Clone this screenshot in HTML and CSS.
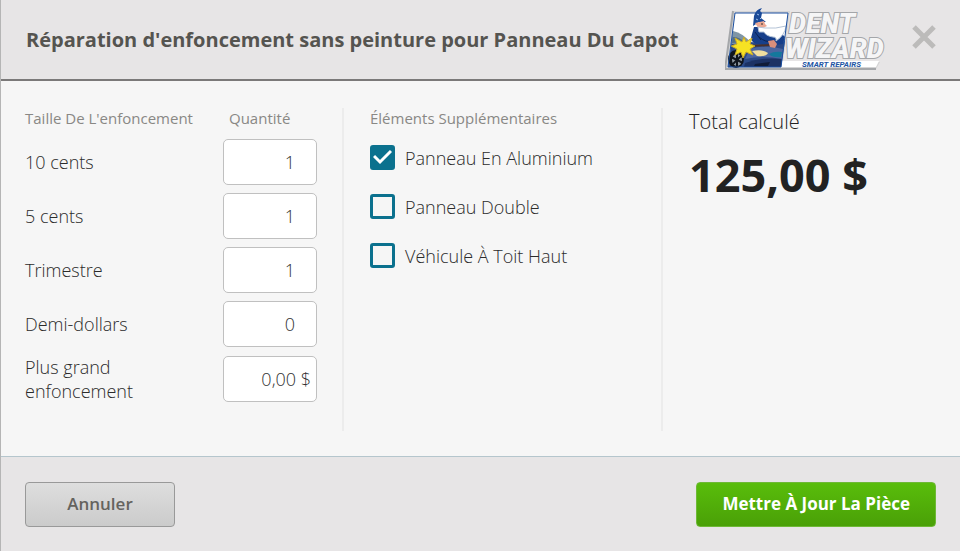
FILE: index.html
```html
<!DOCTYPE html>
<html lang="fr">

<head>
    <meta charset="UTF-8">
    <meta name="viewport" content="width=device-width, initial-scale=1.0">
    <title>Réparation d'enfoncement</title>
    <link rel="stylesheet" href="styles.css">
</head>

<body>
    <form class="modal">
        <header class="modal-header">
            <h1>Réparation d'enfoncement sans peinture pour Panneau Du Capot</h1>
            <svg class="logo" viewBox="0 0 162 66" role="img" aria-label="Dent Wizard Smart Repairs">
                <!-- silver edge -->
                <path d="M8 4H65L58 55H155L151 62H0Z" fill="#d4d4d5"/>
                <path d="M8 4L0 62H151" fill="none" stroke="#a5a7aa" stroke-width="2"/>
                <path d="M57 54H154L151 60H55Z" fill="#fff"/>
                <path d="M10 6H63L56 60H3Z" fill="#fff"/>
                <!-- car -->
                <path d="M8 26Q18 27 24 35L44 36L60 34L56 60H3L7 32Z" fill="#2c4a86"/>
                <path d="M8 24Q18 26 26 36L7 37Z" fill="#7f95a5"/>
                <path d="M8 30Q15 30 19 35L7 36Z" fill="#536f86"/>
                <path d="M25 42Q40 37 58 42L57 52Q38 48 20 52Z" fill="#4b66a0"/>
                <path d="M20 56Q36 50 57 52L56 60H19Z" fill="#1c3264"/>
                <path d="M27 44Q38 42 43 46Q41 50 32 49Z" fill="#f0dfa0"/>
                <path d="M44 47Q49 44 57 45L56 50Q48 51 44 47Z" fill="#14789c"/>
                <path d="M30 57L45 55L43 59H29Z" fill="#101c38"/>
                <ellipse cx="11" cy="52" rx="8" ry="9" fill="#10151d"/>
                <ellipse cx="12" cy="53" rx="5" ry="6" fill="#8d969e"/>
                <path d="M12 46V60M6 50L18 56M7 58L17 48" stroke="#10151d" stroke-width="2"/>
                <!-- robe and hat -->
                <path d="M29 20L26 31Q27 37 34 37L44 39L58 37L60 30L56 26L45 27L36 20Z" fill="#173f8a"/>
                <path d="M34 30Q41 36 47 34M30 25L36 33" fill="none" stroke="#0b2355"/>
                <path d="M28 19L29 9Q31 2 37 1L35 4L37 6L36 11L41 15L34 15Z" fill="#1a4997"/>
                <path d="M32 7L34 8M31 12L33 13M35 11L36 12" stroke="#9ec1ec"/>
                <!-- face and beard -->
                <path d="M30 16L39 14L40 17L42 19L38 21L34 22Z" fill="#eba792"/>
                <path d="M36 17H38" stroke="#333"/>
                <path d="M33 20L40 21Q51 22 61 19Q60 28 51 34Q52 30 48 30Q41 29 39 25L34 25Z" fill="#fff" stroke="#b4c3d6"/>
                <!-- hand and tool -->
                <path d="M24 39L45 38" stroke="#4b3029" stroke-width="2"/>
                <path d="M43 34L49 33L52 37L50 41L45 40Z" fill="#d98f7b"/>
                <!-- spark -->
                <path d="M19 30L21 35L27 31L25 37L30 39L25 42L28 48L21 45L18 51L16 45L10 48L12 42L6 39L12 37L10 31L17 35Z" fill="#f7e223" stroke="#c9a92a"/>
                <path d="M10 6H63L56 60H3Z" fill="none" stroke="#1b4fa0"/>
                <text class="logo-name" x="64" y="26">DENT</text>
                <text class="logo-name" x="60" y="51">WIZARD</text>
                <text class="logo-tag" x="77" y="60">SMART REPAIRS</text>
            </svg>
            <button class="close" type="button" aria-label="Fermer">
                <svg viewBox="0 0 24 24"><path d="M2 2L22 22M22 2L2 22"/></svg>
            </button>
        </header>

        <div class="modal-body">
            <section class="sizes">
                <div class="row head">
                    <span>Taille De L'enfoncement</span>
                    <span class="qty-title">Quantité</span>
                </div>
                <div class="row">
                    <label for="dime">10 cents</label>
                    <input class="qty" type="text" id="dime" value="1">
                </div>
                <div class="row">
                    <label for="nickel">5 cents</label>
                    <input class="qty" type="text" id="nickel" value="1">
                </div>
                <div class="row">
                    <label for="quarter">Trimestre</label>
                    <input class="qty" type="text" id="quarter" value="1">
                </div>
                <div class="row">
                    <label for="half">Demi-dollars</label>
                    <input class="qty" type="text" id="half" value="0">
                </div>
                <div class="row">
                    <label for="oversize">Plus grand enfoncement</label>
                    <input class="qty money" type="text" id="oversize" value="0,00 $">
                </div>
            </section>

            <section class="extras">
                <h2>Éléments Supplémentaires</h2>
                <label class="check"><input type="checkbox" checked> Panneau En Aluminium</label>
                <label class="check"><input type="checkbox"> Panneau Double</label>
                <label class="check"><input type="checkbox"> Véhicule À Toit Haut</label>
            </section>

            <section class="total">
                <p>Total calculé</p>
                <strong>125,00 $</strong>
            </section>
        </div>

        <footer class="modal-footer">
            <button class="btn" type="button">Annuler</button>
            <button class="btn primary" type="submit">Mettre À Jour La Pièce</button>
        </footer>
    </form>
</body>

</html>
```
FILE: styles.css
```css
* {
    box-sizing: border-box;
}

body {
    margin: 0;
    background: #f6f6f6;
    color: #2b2b2b;
    font-family: "Open Sans", sans-serif;
    font-size: 18px;
    font-weight: 350;
    line-height: 24px;
}

.modal {
    display: flex;
    flex-direction: column;
    min-height: 100vh;
    border-left: 1px solid #b5b5b5;
}

.modal-header {
    display: flex;
    align-items: center;
    height: 81px;
    padding: 0 24px 0 25px;
    background: #e7e5e6;
    border-bottom: 2px solid #7b7979;
}

h1 {
    flex: 1;
    margin: 0;
    font-size: 20px;
    font-weight: 700;
    color: #555450;
}

.logo {
    width: 162px;
    height: 66px;
    margin-right: 25px;
}

.logo-name {
    font-family: Roboto, sans-serif;
    font-size: 27px;
    font-style: italic;
    font-weight: 900;
    fill: #f5f5f6;
    stroke: #a4a6a9;
    stroke-width: 2px;
    paint-order: stroke;
}

.logo-tag {
    font-family: Roboto, sans-serif;
    font-size: 8px;
    font-style: italic;
    font-weight: 700;
    fill: #2456a5;
}

.close {
    width: 24px;
    height: 24px;
    padding: 0;
    margin-bottom: 6px;
    border: none;
    background: none;
    cursor: pointer;
}

.close svg {
    display: block;
    fill: none;
    stroke: #bcbbba;
    stroke-width: 5;
}

.modal-body {
    display: grid;
    grid-template-columns: 319fr 319fr 273fr;
    flex: 1;
    padding: 27px 24px 25px;
}

.sizes {
    padding-right: 25px;
    border-right: 2px solid #ececec;
}

.row {
    display: flex;
    align-items: center;
    justify-content: space-between;
    margin-bottom: 8px;
}

.row label {
    max-width: 130px;
}

.head,
h2 {
    margin: 0 0 10px;
    font-size: 15px;
    font-weight: 400;
    line-height: 21px;
    color: #898885;
}

.qty-title {
    width: 88px;
}

.qty {
    width: 94px;
    height: 46px;
    padding: 0 21px;
    border: 1px solid #c0c0c0;
    border-radius: 5px;
    background: #fff;
    color: #333;
    font: inherit;
    text-align: right;
}

.money {
    padding: 0 5px;
}

.extras {
    padding-left: 26px;
    border-right: 2px solid #ececec;
}

.extras h2 {
    margin-bottom: 16px;
}

.check {
    display: flex;
    align-items: center;
    gap: 10px;
    margin-bottom: 24px;
}

.check input {
    appearance: none;
    width: 25px;
    height: 25px;
    margin: 0;
    border: 3px solid #0b718e;
    border-radius: 3px;
}

.check input:checked {
    background: #0b718e url("data:image/svg+xml,%3Csvg xmlns='http://www.w3.org/2000/svg' viewBox='0 0 19 19'%3E%3Cpath d='M1 8l6 6L18 3' fill='none' stroke='white' stroke-width='3'/%3E%3C/svg%3E") center no-repeat;
}

.total {
    padding-left: 26px;
    color: #222;
}

.total p {
    margin: 2px 0 21px;
    font-size: 20px;
}

.total strong {
    font-size: 45px;
    font-weight: 700;
    line-height: 40px;
}

.modal-footer {
    display: flex;
    align-items: center;
    justify-content: space-between;
    height: 95px;
    padding: 0 24px;
    background: #e7e5e6;
    border-top: 1px solid #b5c6cd;
}

.btn {
    min-width: 150px;
    height: 45px;
    padding: 0 25px;
    border: 1px solid #999;
    border-radius: 4px;
    background: linear-gradient(#dedede, #cbcbcb);
    color: #65635e;
    font: inherit;
    font-size: 17px;
    font-weight: 600;
    cursor: pointer;
}

.primary {
    border-color: #6eb936;
    background: linear-gradient(#59bd0b, #4aa007);
    color: #fff;
    font-weight: 700;
}
```
